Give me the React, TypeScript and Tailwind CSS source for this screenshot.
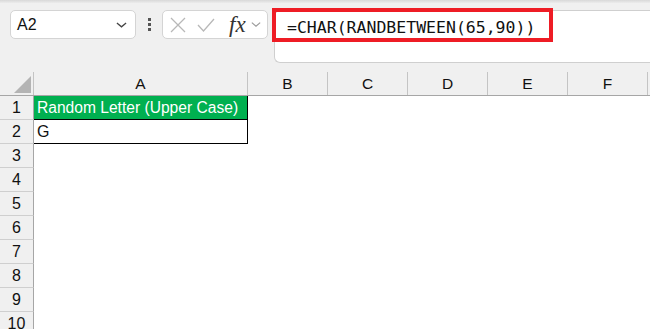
import React from 'react';

const cols = [
  { label: 'A', w: 'w-[214px]' },
  { label: 'B', w: 'w-[80px]' },
  { label: 'C', w: 'w-[80px]' },
  { label: 'D', w: 'w-[80px]' },
  { label: 'E', w: 'w-[80px]' },
  { label: 'F', w: 'w-[80px]' },
];

const rows = [1, 2, 3, 4, 5, 6, 7, 8, 9, 10];

const Chevron: React.FC<{ className?: string }> = ({ className }) => (
  <svg viewBox="0 0 12 6" className={className} fill="none" stroke="currentColor" strokeWidth="1.4">
    <path d="M1 0.8 L6 5 L11 0.8" />
  </svg>
);

const App: React.FC = () => {
  return (
    <div className="relative w-[650px] h-[329px] overflow-hidden bg-[#f0f0f0] font-['Liberation_Sans',sans-serif] text-[#111]">
      <div className="h-[3px] bg-gradient-to-b from-[#d8d8d8] to-[#ececec]" />

      {/* formula toolbar */}
      <div className="flex items-start pl-[10px] pt-[7px] h-[69px]">
        <div className="shrink-0 flex items-center justify-between w-[126px] h-[29px] bg-white border border-[#d4d4d4] rounded-[5px] pl-[6px] pr-[8px]">
          <span className="text-[16px] leading-none">A2</span>
          <Chevron className="w-[11px] h-[6px] text-[#444]" />
        </div>
        <div className="shrink-0 flex flex-col items-center justify-center gap-[2px] w-[26px] h-[29px]">
          <span className="w-[3px] h-[3px] bg-[#555]" />
          <span className="w-[3px] h-[3px] bg-[#555]" />
          <span className="w-[3px] h-[3px] bg-[#555]" />
        </div>
        <div className="shrink-0 flex items-center w-[106px] h-[29px] bg-white border border-[#d4d4d4] rounded-[5px] pl-[7px]">
          <svg viewBox="0 0 16 16" className="w-[16px] h-[16px]" fill="none" stroke="#b8b8b8" strokeWidth="1.3">
            <path d="M1 1 L15 15 M15 1 L1 15" />
          </svg>
          <svg viewBox="0 0 18 14" className="w-[18px] h-[14px] ml-[11px]" fill="none" stroke="#b8b8b8" strokeWidth="1.3">
            <path d="M1 7 L6.5 13 L17 1" />
          </svg>
          <span className="ml-[14px] font-['Liberation_Serif',serif] italic text-[23px] leading-none text-[#333]">fx</span>
          <Chevron className="ml-[5px] w-[10px] h-[5px] text-[#999]" />
        </div>
        <div className="ml-[6px] flex-1 h-[53px] bg-white border border-[#cfcfcf] rounded-l-[6px] border-r-0 pl-[12px] pt-[5px]">
          <span className="font-['DejaVu_Sans_Mono',monospace] text-[16.5px] leading-[20px] text-[#111]">=CHAR(RANDBETWEEN(65,90))</span>
        </div>
      </div>

      {/* highlight annotation */}
      <div className="absolute left-[272px] top-[8px] w-[281px] h-[34px] border-[4px] border-[#ee1c25]" />

      {/* column headers */}
      <div className="flex h-[24px] border-b border-[#a6a6a6]">
        <div className="w-[34px] shrink-0 border-r border-[#c4c4c4] flex items-end justify-end pr-[2px] pb-[2px]">
          <svg viewBox="0 0 17 17" className="w-[17px] h-[17px]">
            <path d="M17 0 L17 17 L0 17 Z" fill="#b4b4b4" />
          </svg>
        </div>
        {cols.map((c) => (
          <div
            key={c.label}
            className={`${c.w} shrink-0 border-r border-[#c4c4c4] flex items-center justify-center text-[15.5px] pt-[1px]`}
          >
            {c.label}
          </div>
        ))}
        <div className="flex-1" />
      </div>

      {/* rows */}
      {rows.map((r) => (
        <div key={r} className="flex h-[24px]">
          <div className="w-[34px] shrink-0 border-r border-b border-r-[#a6a6a6] border-b-[#cfcfcf] flex items-center justify-center text-[16px]">
            {r}
          </div>
          {r === 1 && (
            <div className="w-[214px] shrink-0 bg-[#00b050] border-r border-b border-black text-white text-[15.6px] flex items-center pl-[3px]">
              Random Letter (Upper Case)
            </div>
          )}
          {r === 2 && (
            <div className="w-[214px] shrink-0 bg-white border-r border-b border-black text-[16px] flex items-center pl-[3px]">
              G
            </div>
          )}
          <div className="flex-1 bg-white" />
        </div>
      ))}
    </div>
  );
};

export default App;
